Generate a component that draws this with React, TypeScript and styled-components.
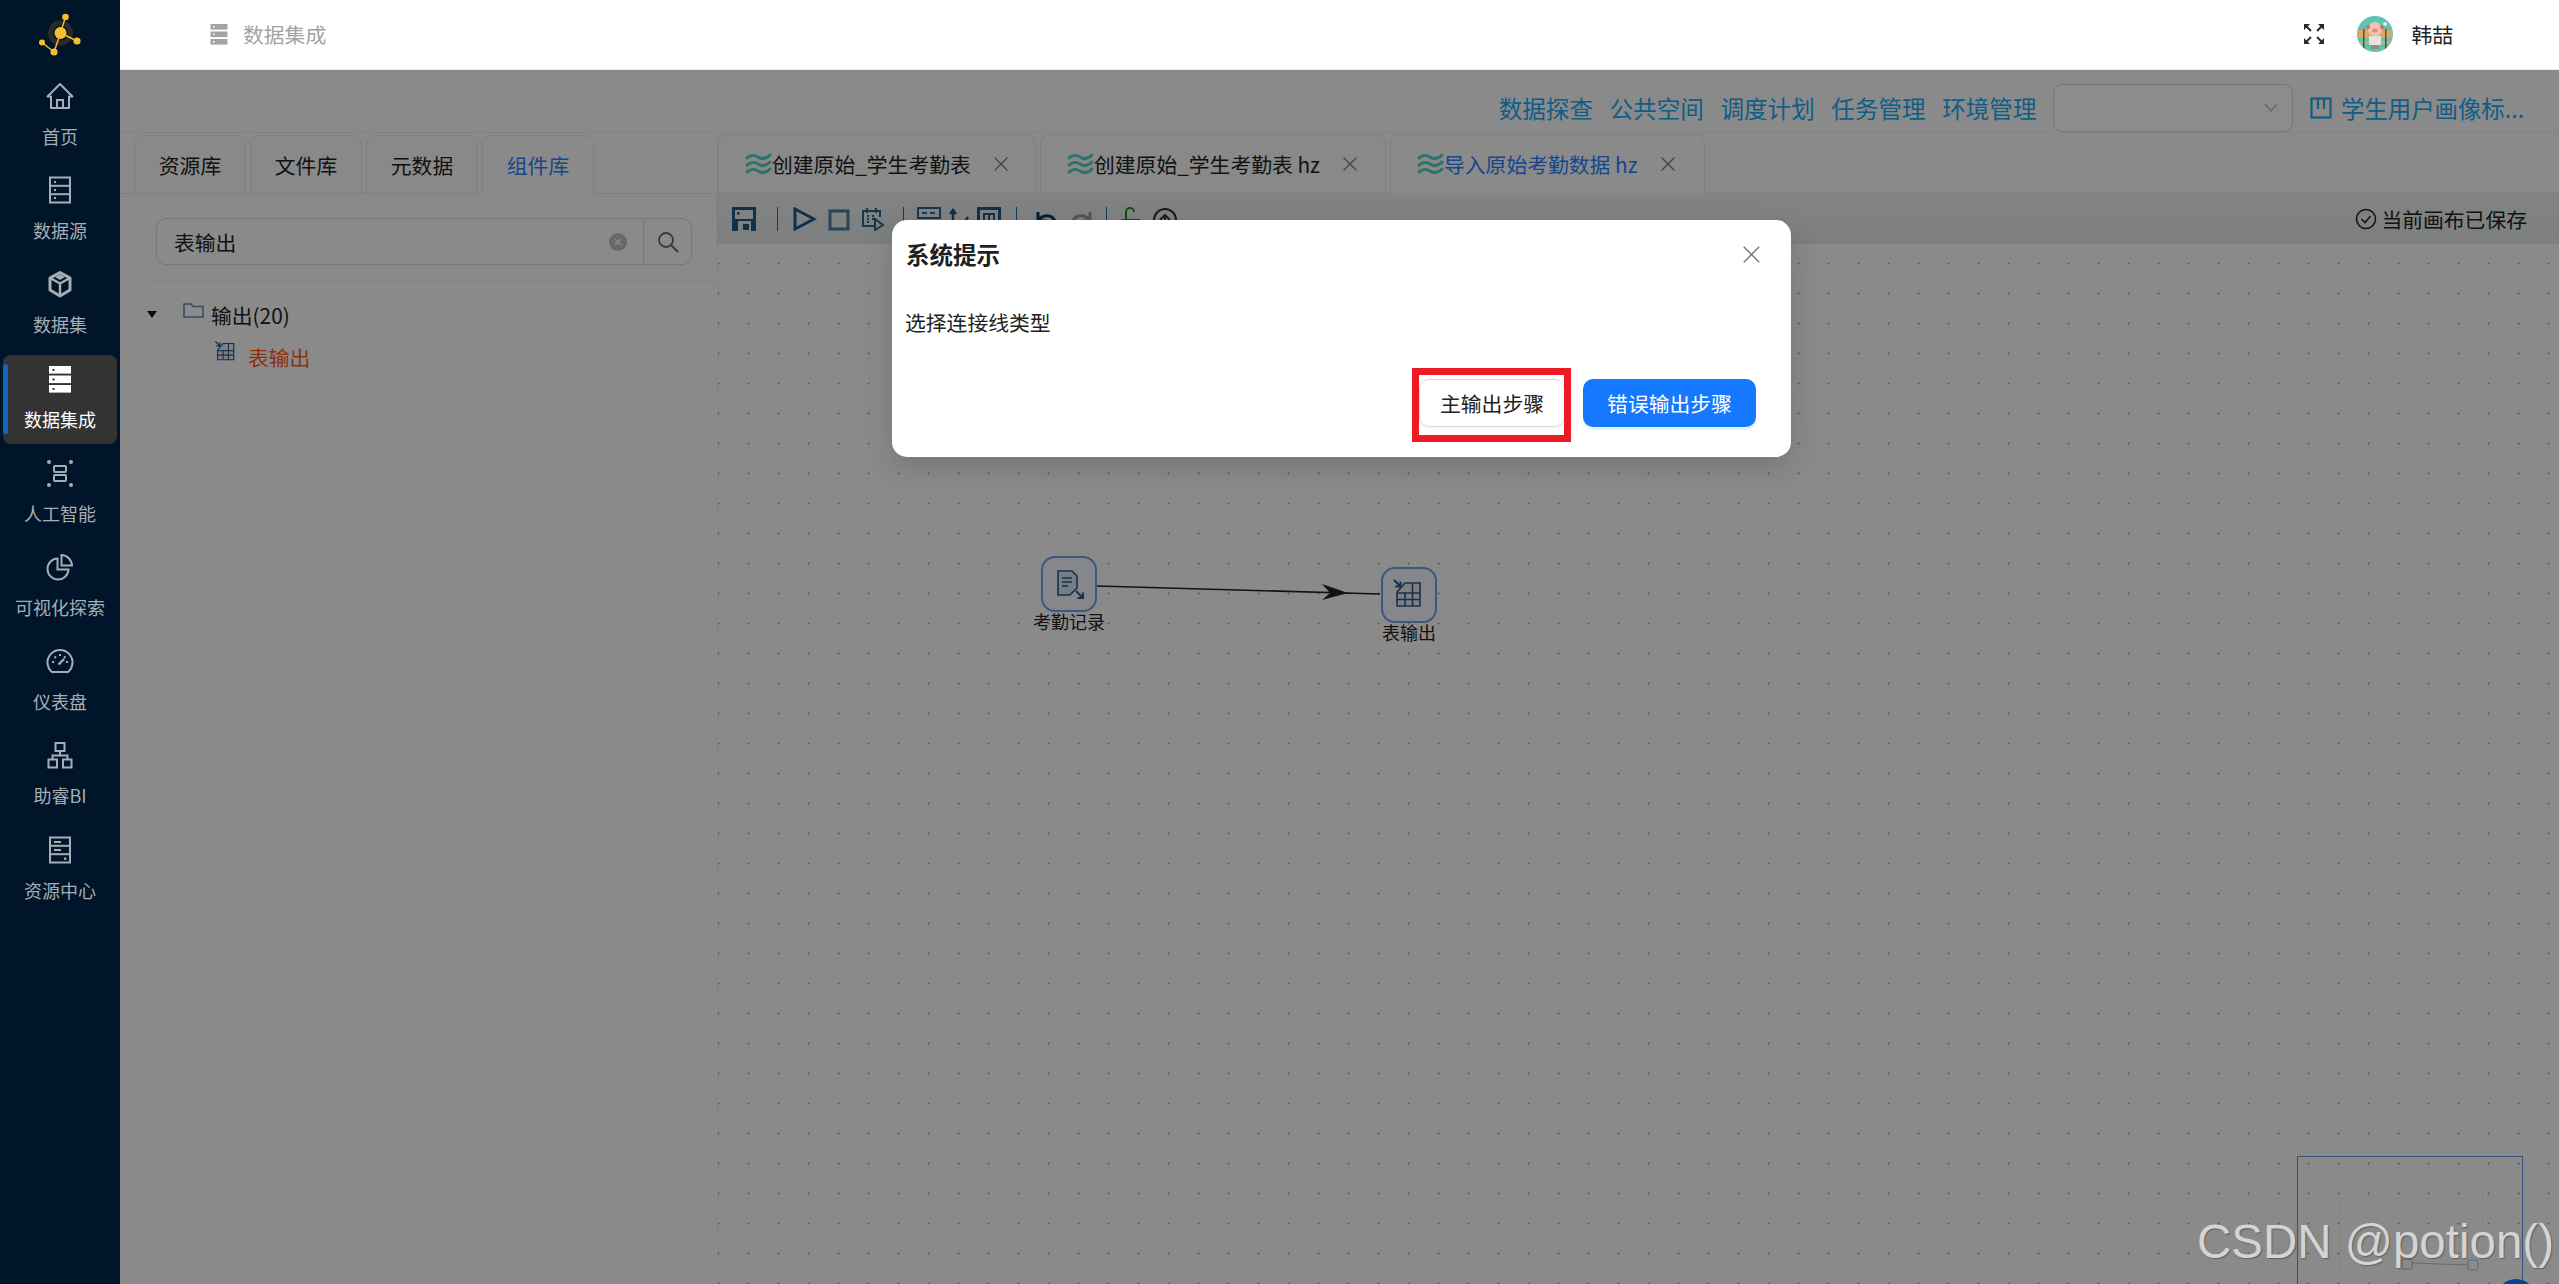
import React from 'react'
import styled, { createGlobalStyle } from 'styled-components'

const FONT = `"Noto Sans CJK SC", "Noto Sans", sans-serif`

const GlobalStyle = createGlobalStyle`
  html, body, #root {
    margin: 0;
    height: 100%;
  }
  body {
    font-family: ${FONT};
    overflow: hidden;
  }
`

const Page = styled.div`
  position: relative;
  display: flex;
  width: 2559px;
  height: 1284px;
  overflow: hidden;
`

/* ---------- sidebar ---------- */

const Sidebar = styled.nav`
  width: 120px;
  flex: none;
  background: #00152a;
  display: flex;
  flex-direction: column;
  align-items: center;
`

const LogoSlot = styled.div`
  height: 72px;
  width: 100%;
  svg {
    display: block;
  }
`

const SideItem = styled.div<{ $active?: boolean }>`
  position: relative;
  box-sizing: border-box;
  width: 114px;
  height: 89px;
  margin-bottom: 5.2px;
  padding-top: 10px;
  border-radius: 8px;
  display: flex;
  flex-direction: column;
  align-items: center;
  color: ${(p) => (p.$active ? '#fff' : '#a6adb4')};
  background: ${(p) => (p.$active ? '#333' : 'transparent')};
  &::before {
    content: '';
    display: ${(p) => (p.$active ? 'block' : 'none')};
    position: absolute;
    left: 0;
    top: 9px;
    width: 5px;
    height: 70px;
    border-radius: 3px;
    background: #1565c0;
  }
`

const SideIcon = styled.div`
  height: 28px;
  display: flex;
  align-items: center;
  justify-content: center;
`

const SideLabel = styled.div`
  margin-top: 15px;
  font-size: 18px;
  line-height: 22px;
  white-space: nowrap;
`

const Logo = () => (
  <svg width="120" height="72" viewBox="0 0 120 72">
    <circle cx="60.5" cy="33" r="10" fill="none" stroke="#2b2a26" strokeWidth="5" />
    <g stroke="#f5c02e" strokeWidth="1.4">
      <line x1="60.5" y1="33" x2="65.5" y2="17" />
      <line x1="60.5" y1="33" x2="77" y2="41" />
      <line x1="60.5" y1="33" x2="54" y2="52" />
      <line x1="54" y1="52" x2="42" y2="42.5" />
    </g>
    <g fill="#f5c02e">
      <circle cx="60.5" cy="33" r="6" />
      <circle cx="65.5" cy="17" r="3.3" />
      <circle cx="77" cy="41" r="3.6" />
      <circle cx="42" cy="42.5" r="3" />
      <circle cx="54" cy="52" r="3.6" />
    </g>
  </svg>
)

const IconBase = ({ w = 28, h = 28, children }: { w?: number; h?: number; children: React.ReactNode }) => (
  <svg width={w} height={h} viewBox={`0 0 ${w} ${h}`} fill="none" stroke="currentColor" strokeWidth="2">
    {children}
  </svg>
)

const HomeIcon = () => (
  <IconBase>
    <path d="M1.5 14.5 14 2 26.5 14.5 H23 V26 H5 V14.5 Z" strokeLinejoin="round" />
    <path d="M11 26 V18 H17 V26" />
  </IconBase>
)

const ServerIcon = () => (
  <IconBase>
    <rect x="4" y="1.5" width="20" height="25" />
    <line x1="4" y1="9.8" x2="24" y2="9.8" />
    <line x1="4" y1="18.2" x2="24" y2="18.2" />
    <g fill="currentColor" stroke="none">
      <rect x="8" y="5" width="2" height="2" />
      <rect x="8" y="13" width="2" height="2" />
      <rect x="8" y="21" width="2" height="2" />
    </g>
  </IconBase>
)

const CubeIcon = () => (
  <IconBase>
    <path d="M14 2.5 24 8 V20 L14 26 4 20 V8 Z" strokeWidth="3" strokeLinejoin="round" />
    <path d="M5 8.5 14 13.5 23 8.5 M14 13.5 V25" strokeWidth="2.4" />
    <path d="M9 7 14 4.2 19 7 14 10 Z" fill="currentColor" stroke="none" />
  </IconBase>
)

const StackIcon = () => (
  <svg width="24" height="28" viewBox="0 0 24 28">
    {[1, 10.5, 20].map((y) => (
      <g key={y}>
        <rect x="1" y={y} width="22" height="7.6" fill="currentColor" />
        <rect x="4.5" y={y + 3} width="2" height="2" fill="#333" />
      </g>
    ))}
  </svg>
)

const ScanIcon = () => (
  <IconBase>
    <g fill="currentColor" stroke="none">
      <circle cx="3" cy="3" r="2" />
      <circle cx="25" cy="3" r="2" />
      <circle cx="3" cy="26" r="2" />
      <circle cx="25" cy="26" r="2" />
    </g>
    <rect x="8" y="7" width="12" height="6" rx="1" />
    <rect x="8" y="16" width="12" height="6" rx="1" />
  </IconBase>
)

const PieIcon = () => (
  <IconBase>
    <path d="M11.5 5.5 A10.5 10.5 0 1 0 22.5 16.5 H11.5 Z" />
    <path d="M15.5 2 A11 11 0 0 1 26 12.5 H15.5 Z" />
  </IconBase>
)

const GaugeIcon = () => (
  <IconBase>
    <path d="M6 25 A12.5 12.5 0 1 1 22 25 Z" strokeLinejoin="round" />
    <path d="M14 7 V9 M6 15 H8 M20 15 H22 M8.5 9.5 10 11 M19.5 9.5 18 11" />
    <path d="M12.5 17.5 18 12" strokeWidth="2.4" />
  </IconBase>
)

const HierarchyIcon = () => (
  <IconBase>
    <rect x="9.5" y="2" width="9" height="8" />
    <rect x="2.5" y="18.5" width="8.5" height="8" />
    <rect x="17" y="18.5" width="8.5" height="8" />
    <path d="M14 10 V14.5 M6.5 18.5 V14.5 H21.5 V18.5" />
  </IconBase>
)

const CabinetIcon = () => (
  <IconBase>
    <rect x="4" y="1.5" width="20" height="25" />
    <line x1="4" y1="9.8" x2="24" y2="9.8" />
    <line x1="4" y1="18.2" x2="24" y2="18.2" />
    <path d="M8 6 H15 M8 14 H15" />
    <rect x="18" y="21.5" width="2.4" height="2.4" fill="currentColor" stroke="none" />
  </IconBase>
)

const sideItems = [
  { label: '首页', icon: <HomeIcon /> },
  { label: '数据源', icon: <ServerIcon /> },
  { label: '数据集', icon: <CubeIcon /> },
  { label: '数据集成', icon: <StackIcon />, active: true },
  { label: '人工智能', icon: <ScanIcon /> },
  { label: '可视化探索', icon: <PieIcon /> },
  { label: '仪表盘', icon: <GaugeIcon /> },
  { label: '助睿BI', icon: <HierarchyIcon /> },
  { label: '资源中心', icon: <CabinetIcon /> },
]

/* ---------- header ---------- */

const RightColumn = styled.div`
  flex: 1;
  min-width: 0;
  display: flex;
  flex-direction: column;
`

const Header = styled.header`
  box-sizing: border-box;
  height: 70px;
  flex: none;
  background: #fff;
  border-bottom: 1px solid #f0f0f0;
  display: flex;
  align-items: center;
  padding: 0 106px 2px 90px;
  font-size: 20.8px;
`

const Crumb = styled.div`
  display: flex;
  align-items: center;
  gap: 15px;
  color: #a3a3a3;
  flex: 1;
  svg {
    display: block;
  }
`

const UserBox = styled.div`
  display: flex;
  align-items: center;
  color: #222;
  svg {
    display: block;
  }
`

const ExpandIcon = () => (
  <svg width="22" height="22" viewBox="0 0 22 22" fill="#2a2a2a" stroke="#2a2a2a" strokeWidth="2">
    <path d="M8 8 2.5 2.5 M14 8 19.5 2.5 M8 14 2.5 19.5 M14 14 19.5 19.5" />
    <path d="M1 1 H7 L1 7 Z M21 1 H15 L21 7 Z M1 21 H7 L1 15 Z M21 21 H15 L21 15 Z" stroke="none" />
  </svg>
)

const AvatarWrap = styled.div`
  width: 36px;
  height: 36px;
  margin: 0 18px 0 32px;
  border-radius: 50%;
  overflow: hidden;
`

const Avatar = () => (
  <svg width="36" height="36" viewBox="0 0 36 36">
    <rect width="36" height="36" fill="#5cc4b2" />
    <g fill="#d9a862">
      <rect x="1" y="14" width="34" height="8" />
      <rect x="1" y="25" width="34" height="3" />
    </g>
    <rect x="6" y="13" width="1.5" height="20" fill="#6b4a2a" />
    <rect x="28" y="13" width="1.5" height="20" fill="#6b4a2a" />
    <rect x="12" y="20" width="12" height="9" fill="#e8e4dc" />
    <rect x="14" y="29" width="8" height="4" fill="#9a8a7a" />
    <circle cx="18" cy="13" r="7" fill="#f2c4b4" />
    <circle cx="11" cy="11" r="2.2" fill="#c77a6c" />
    <circle cx="25" cy="11" r="2.2" fill="#c77a6c" />
    <ellipse cx="18" cy="14.5" rx="3" ry="2" fill="#e58b8b" />
    <circle cx="28" cy="8" r="2" fill="#eee" />
  </svg>
)

/* ---------- workspace under the mask ---------- */

const Main = styled.main`
  position: relative;
  flex: 1;
  min-height: 0;
  display: flex;
  flex-direction: column;
  background: #fcfcfc;
`

const NavBar = styled.div`
  box-sizing: border-box;
  height: 63px;
  flex: none;
  border-bottom: 1px solid #eee;
  display: flex;
  align-items: center;
  justify-content: flex-end;
  padding: 13px 34px 0 0;
`

const NavLink = styled.a`
  font-size: 23.6px;
  line-height: 32px;
  color: #20aaf5;
  margin-right: 16.5px;
  white-space: nowrap;
`

const SelectBox = styled.div`
  box-sizing: border-box;
  width: 240px;
  height: 48px;
  border: 1px solid #d9d9d9;
  border-radius: 9px;
  background: #fff;
  display: flex;
  align-items: center;
  justify-content: flex-end;
  padding-right: 14px;
  color: #bbb;
  margin-right: 17px;
`

const ProjectLink = styled.div`
  display: flex;
  align-items: center;
  gap: 9px;
  width: 215px;
  font-size: 23.4px;
  line-height: 32px;
  color: #20aaf5;
  white-space: nowrap;
  svg {
    display: block;
    flex: none;
  }
`

const Workspace = styled.div`
  flex: 1;
  min-height: 0;
  display: flex;
`

const LeftPanel = styled.aside`
  box-sizing: border-box;
  width: 598px;
  flex: none;
  border-right: 1px solid #eee;
  display: flex;
  flex-direction: column;
`

const LeftTabs = styled.div`
  box-sizing: border-box;
  height: 61px;
  padding: 2px 0 0 14px;
  display: flex;
  gap: 4px;
  border-bottom: 1px solid #e8e8e8;
`

const LeftTab = styled.div<{ $active?: boolean }>`
  box-sizing: border-box;
  width: 112px;
  height: 59px;
  margin-bottom: -1px;
  border: 1px solid #e8e8e8;
  border-bottom-color: ${(p) => (p.$active ? '#fcfcfc' : '#e8e8e8')};
  border-radius: 10px 10px 0 0;
  background: ${(p) => (p.$active ? '#fcfcfc' : '#fafafa')};
  color: ${(p) => (p.$active ? '#2a80ff' : '#222')};
  font-size: 20.8px;
  display: flex;
  align-items: center;
  justify-content: center;
`

const SearchArea = styled.div`
  margin-left: 29px;
  padding: 24px 25px 16px 7px;
  border-bottom: 1px solid #eee;
`

const SearchBox = styled.div`
  box-sizing: border-box;
  height: 47px;
  display: flex;
  border: 1px solid #d9d9d9;
  border-radius: 10px;
  background: #fcfcfc;
`

const SearchInput = styled.div`
  flex: 1;
  display: flex;
  align-items: center;
  justify-content: space-between;
  padding: 0 16px 0 17px;
  font-size: 20.8px;
  color: #222;
`

const ClearDot = styled.span`
  width: 18px;
  height: 18px;
  border-radius: 50%;
  background: #bdbdbd;
  display: flex;
  align-items: center;
  justify-content: center;
`

const SearchButton = styled.div`
  width: 47px;
  border-left: 1px solid #d9d9d9;
  color: #666;
  display: flex;
  align-items: center;
  justify-content: center;
`

const Tree = styled.div`
  padding: 12px 0 0 25px;
`

const TreeRow = styled.div<{ $indent?: number }>`
  display: flex;
  align-items: center;
  height: 42px;
  margin-left: ${(p) => p.$indent || 0}px;
  font-size: 20.8px;
  color: #222;
  svg {
    display: block;
    flex: none;
  }
`

const Caret = styled.span`
  width: 0;
  height: 0;
  margin: 0 26px 2px 2px;
  border-left: 5px solid transparent;
  border-right: 5px solid transparent;
  border-top: 7px solid #111;
`

const RowIcon = styled.span<{ $gap: number }>`
  margin-right: ${(p) => p.$gap}px;
  margin-bottom: 10px;
`

const LeafName = styled.span`
  color: #ff5a14;
`

/* ---------- editor ---------- */

const Editor = styled.section`
  flex: 1;
  min-width: 0;
  display: flex;
  flex-direction: column;
`

const FlowTabs = styled.div`
  box-sizing: border-box;
  height: 60px;
  flex: none;
  padding-top: 1px;
  display: flex;
  gap: 4px;
  border-bottom: 1px solid #e4e4e4;
`

const FlowTab = styled.div<{ $w: number; $active?: boolean }>`
  box-sizing: border-box;
  width: ${(p) => p.$w}px;
  height: 59px;
  margin-bottom: -1px;
  padding-left: 26px;
  border: 1px solid #e8e8e8;
  border-bottom-color: ${(p) => (p.$active ? '#fcfcfc' : '#e8e8e8')};
  border-radius: 10px 10px 0 0;
  background: ${(p) => (p.$active ? '#fcfcfc' : '#fafafa')};
  color: ${(p) => (p.$active ? '#2a80ff' : '#222')};
  font-size: 20.8px;
  display: flex;
  align-items: center;
  white-space: nowrap;
  svg {
    display: block;
    flex: none;
  }
`

const TabClose = styled.span`
  margin-left: 22px;
  color: #777;
  display: flex;
`

const Toolbar = styled.div`
  box-sizing: border-box;
  height: 51px;
  flex: none;
  background: linear-gradient(#eef1f1, #e4e8e8);
  box-shadow: 0 2px 3px rgba(0, 0, 0, 0.12);
  padding: 14px 32px 0 14px;
  display: flex;
  align-items: flex-start;
  position: relative;
  color: #1e5a8a;
  svg {
    display: block;
    flex: none;
  }
`

const ToolDivider = styled.span`
  width: 1px;
  height: 24px;
  background: #1e6fc0;
`

const ToolGroup = styled.div<{ $gap?: number; $mx?: number }>`
  display: flex;
  gap: ${(p) => p.$gap ?? 10}px;
  margin: 0 ${(p) => p.$mx ?? 13}px;
`

const SavedNote = styled.div`
  margin-left: auto;
  margin-top: -3px;
  display: flex;
  align-items: center;
  gap: 4px;
  font-size: 20.8px;
  line-height: 30px;
  color: #222;
`

const Canvas = styled.div`
  position: relative;
  flex: 1;
  min-height: 0;
  background-color: #fcfcfc;
  background-image: radial-gradient(circle at 1.5px 1.5px, #a8a8a8 0, #a8a8a8 0.8px, transparent 1.3px);
  background-size: 30px 30px;
  background-position: -1px 18px;
`

const EdgeLayer = styled.svg`
  position: absolute;
  left: 0;
  top: 0;
  width: 100%;
  height: 100%;
  pointer-events: none;
`

const FlowNode = styled.div<{ $x: number; $y: number }>`
  position: absolute;
  left: ${(p) => p.$x}px;
  top: ${(p) => p.$y}px;
  width: 56px;
  display: flex;
  flex-direction: column;
  align-items: center;
`

const NodeBox = styled.div`
  box-sizing: border-box;
  width: 56px;
  height: 56px;
  border: 2px solid #6d9eea;
  border-radius: 14px;
  background: #f2f6fc;
  display: flex;
  align-items: center;
  justify-content: center;
  svg {
    display: block;
  }
`

const NodeLabel = styled.div`
  font-size: 18px;
  line-height: 18px;
  color: #222;
  white-space: nowrap;
`

const MiniMap = styled.div`
  position: absolute;
  right: 36px;
  top: 912px;
  width: 226px;
  height: 300px;
  box-sizing: border-box;
  border: 1px solid #5f97e0;
`

const MiniFrame = styled.div`
  margin: 30px 0 0 42px;
  width: 141px;
  height: 90px;
  border: 1px solid #f3f3f3;
  position: relative;
  svg {
    display: block;
  }
`

const HelpBubble = styled.div`
  position: absolute;
  right: 23px;
  top: 1035px;
  width: 40px;
  height: 40px;
  border-radius: 50%;
  background: #1677ff;
`

/* ---------- modal ---------- */

const Mask = styled.div`
  position: absolute;
  inset: 0;
  background: rgba(0, 0, 0, 0.45);
`

const Modal = styled.div`
  position: absolute;
  left: 772px;
  top: 150px;
  box-sizing: border-box;
  width: 899px;
  height: 237px;
  padding: 0 35px 0 13px;
  background: #fff;
  border-radius: 15px;
  box-shadow: 0 10px 30px rgba(0, 0, 0, 0.15);
  display: flex;
  flex-direction: column;
`

const ModalHead = styled.div`
  height: 68px;
  display: flex;
  align-items: center;
  justify-content: space-between;
  padding-left: 1px;
  font-size: 23.5px;
  font-weight: 700;
  color: #1f1f1f;
  svg {
    display: block;
    margin-right: -5px;
    color: #777;
  }
`

const ModalBody = styled.div`
  margin-top: 18px;
  font-size: 20.8px;
  line-height: 32px;
  color: #222;
`

const ModalFoot = styled.div`
  margin-top: 41px;
  display: flex;
  justify-content: flex-end;
  gap: 18px;
`

const Flagged = styled.div`
  position: relative;
  &::after {
    content: '';
    position: absolute;
    left: -7px;
    right: -6px;
    top: -11px;
    bottom: -15px;
    border: 7px solid #ed1c24;
    pointer-events: none;
  }
`

const DialogButton = styled.button<{ $primary?: boolean }>`
  box-sizing: border-box;
  height: 48px;
  width: ${(p) => (p.$primary ? 173 : 146)}px;
  padding: 0;
  border: ${(p) => (p.$primary ? 'none' : '1px solid #d9d9d9')};
  border-radius: 10px;
  background: ${(p) => (p.$primary ? '#1677ff' : '#fff')};
  color: ${(p) => (p.$primary ? '#fff' : '#222')};
  font-family: ${FONT};
  font-size: 20.8px;
  box-shadow: 0 3px 0 ${(p) => (p.$primary ? 'rgba(5, 145, 255, 0.1)' : 'rgba(0, 0, 0, 0.02)')};
`

const Watermark = styled.div`
  position: absolute;
  right: 5px;
  bottom: 12px;
  font-family: "Liberation Sans", sans-serif;
  font-size: 47.5px;
  line-height: 60px;
  color: #d4d4d4;
  text-shadow: 1px 1px 1px rgba(60, 60, 60, 0.55);
  white-space: nowrap;
`

/* ---------- small drawings ---------- */

const WaveIcon = () => (
  <svg width="27" height="24" viewBox="0 0 27 24" fill="none" stroke="#55cfc4" strokeWidth="3" strokeLinecap="round">
    <path d="M2 6 C7 2 10 3 13 5 C16 7 20 8 25 3" />
    <path d="M2 13 C7 9 10 10 13 12 C16 14 20 15 25 10" />
    <path d="M2 20 C7 16 10 17 13 19 C16 21 20 22 25 17" />
  </svg>
)

const CloseGlyph = ({ size = 16 }: { size?: number }) => (
  <svg width={size} height={size} viewBox="0 0 16 16" fill="none" stroke="currentColor" strokeWidth="1.2">
    <path d="M1.5 1.5 14.5 14.5 M14.5 1.5 1.5 14.5" />
  </svg>
)

const TableGlyph = ({ size = 34 }: { size?: number }) => (
  <svg width={size} height={size} viewBox="0 0 34 34" fill="none" stroke="#2c5a85" strokeWidth="1.6">
    <path d="M13 5 H28 V28 H5 V14 Z" fill="#e4e9f0" />
    <path d="M5 15 H28 M5 21.5 H28 M13 15 V28 M20.5 5 V28" />
    <path d="M2 2 L8.5 8.5 M8.5 3.5 V8.5 H3.5" strokeWidth="2" />
  </svg>
)

const DocGlyph = () => (
  <svg width="34" height="34" viewBox="0 0 34 34" fill="none" stroke="#2c5a85" strokeWidth="1.6">
    <path d="M6 4 H20 L25 9 V21 L18 28 H6 Z" fill="#d5e5f3" />
    <path d="M10 11 H20 M10 15 H20 M10 19 H16" />
    <path d="M24 24 L31 31 M31 25.5 V31 H25.5" strokeWidth="2" />
  </svg>
)

const App = () => (
  <>
    <GlobalStyle />
    <Page>
      <Sidebar>
        <LogoSlot>
          <Logo />
        </LogoSlot>
        {sideItems.map((item) => (
          <SideItem key={item.label} $active={item.active}>
            <SideIcon>{item.icon}</SideIcon>
            <SideLabel>{item.label}</SideLabel>
          </SideItem>
        ))}
      </Sidebar>
      <RightColumn>
        <Header>
          <Crumb>
            <svg width="18" height="22" viewBox="0 0 18 22" fill="#a3a3a3">
              {[1, 8.5, 16].map((y) => (
                <g key={y}>
                  <rect x="0.5" y={y} width="17" height="5.6" />
                  <rect x="3" y={y + 2} width="1.6" height="1.6" fill="#fff" />
                </g>
              ))}
            </svg>
            数据集成
          </Crumb>
          <UserBox>
            <ExpandIcon />
            <AvatarWrap>
              <Avatar />
            </AvatarWrap>
            韩喆
          </UserBox>
        </Header>
        <Main>
          <NavBar>
            <NavLink>数据探查</NavLink>
            <NavLink>公共空间</NavLink>
            <NavLink>调度计划</NavLink>
            <NavLink>任务管理</NavLink>
            <NavLink>环境管理</NavLink>
            <SelectBox>
              <svg width="14" height="9" viewBox="0 0 14 9" fill="none" stroke="currentColor" strokeWidth="1.4">
                <path d="M1 1 7 8 13 1" />
              </svg>
            </SelectBox>
            <ProjectLink>
              <svg width="22" height="22" viewBox="0 0 22 22" fill="none" stroke="currentColor" strokeWidth="2.2">
                <rect x="1.5" y="1.5" width="19" height="19" />
                <path d="M8 1.5 V12 M14 1.5 V12" />
              </svg>
              学生用户画像标...
            </ProjectLink>
          </NavBar>
          <Workspace>
            <LeftPanel>
              <LeftTabs>
                <LeftTab>资源库</LeftTab>
                <LeftTab>文件库</LeftTab>
                <LeftTab>元数据</LeftTab>
                <LeftTab $active>组件库</LeftTab>
              </LeftTabs>
              <SearchArea>
                <SearchBox>
                  <SearchInput>
                    表输出
                    <ClearDot>
                      <svg width="8" height="8" viewBox="0 0 8 8" stroke="#fff" strokeWidth="1.2">
                        <path d="M1 1 7 7 M7 1 1 7" />
                      </svg>
                    </ClearDot>
                  </SearchInput>
                  <SearchButton>
                    <svg width="22" height="22" viewBox="0 0 22 22" fill="none" stroke="currentColor" strokeWidth="1.8">
                      <circle cx="9" cy="9" r="7" />
                      <path d="M14 14 21 21" />
                    </svg>
                  </SearchButton>
                </SearchBox>
              </SearchArea>
              <Tree>
                <TreeRow>
                  <Caret />
                  <RowIcon $gap={7}>
                    <svg width="21" height="15" viewBox="0 0 21 15" fill="none" stroke="#5d88b0" strokeWidth="1.5">
                      <path d="M1 14 V1 H8 L10 3.5 H20 V14 Z" />
                    </svg>
                  </RowIcon>
                  输出(20)
                </TreeRow>
                <TreeRow $indent={69}>
                  <RowIcon $gap={10}>
                    <TableGlyph size={24} />
                  </RowIcon>
                  <LeafName>表输出</LeafName>
                </TreeRow>
              </Tree>
            </LeftPanel>
            <Editor>
              <FlowTabs>
                <FlowTab $w={318}>
                  <WaveIcon />
                  创建原始_学生考勤表
                  <TabClose>
                    <CloseGlyph />
                  </TabClose>
                </FlowTab>
                <FlowTab $w={346}>
                  <WaveIcon />
                  创建原始_学生考勤表 hz
                  <TabClose>
                    <CloseGlyph />
                  </TabClose>
                </FlowTab>
                <FlowTab $w={315} $active>
                  <WaveIcon />
                  导入原始考勤数据 hz
                  <TabClose>
                    <CloseGlyph />
                  </TabClose>
                </FlowTab>
              </FlowTabs>
              <Toolbar>
                <svg width="24" height="24" viewBox="0 0 24 24" fill="#1e5a8a">
                  <path d="M0 0 H24 V24 H0 Z M3 3 V12 H21 V3 Z M6 14 V24 H19 V14 Z" fillRule="evenodd" />
                  <rect x="5" y="5" width="2.5" height="2.5" />
                  <rect x="11" y="17" width="6" height="6" />
                </svg>
                <ToolGroup $mx={21} $gap={0}>
                  <ToolDivider />
                </ToolGroup>
                <ToolGroup $mx={-6} $gap={11}>
                  <svg width="24" height="24" viewBox="0 0 24 24" fill="none" stroke="#1e5a8a" strokeWidth="3">
                    <path d="M2 2 21 12 2 22 Z" />
                  </svg>
                  <svg width="22" height="22" viewBox="0 0 22 22" fill="none" stroke="#4a7ca6" strokeWidth="3" style={{ marginTop: 2 }}>
                    <rect x="2" y="2" width="18" height="18" />
                  </svg>
                  <svg width="24" height="24" viewBox="0 0 24 24" fill="none" stroke="#2a6490" strokeWidth="2">
                    <path d="M13 19 H2 V4 H19 V10 M6 1 V6 M15 1 V6" />
                    <path d="M14 12 22 18 14 23 Z" />
                    <path d="M6 9 H9 M11 9 H14 M6 12 H9 M11 12 H13 M6 15 H9" strokeDasharray="2 1" />
                  </svg>
                </ToolGroup>
                <ToolGroup $mx={24} $gap={0}>
                  <ToolDivider />
                </ToolGroup>
                <ToolGroup $mx={-11} $gap={8}>
                  <svg width="24" height="24" viewBox="0 0 24 24" fill="none" stroke="#2a6490" strokeWidth="2">
                    <rect x="1" y="1" width="22" height="10" />
                    <path d="M5 6 H10 M13 6 H18 M1 17 H23" />
                  </svg>
                  <svg width="20" height="24" viewBox="0 0 20 24" fill="none" stroke="#1e5a8a" strokeWidth="2.4">
                    <path d="M4 24 V3 M1 7 4 3 7 7 M11 22 19 10" />
                  </svg>
                  <svg width="24" height="24" viewBox="0 0 24 24" fill="none" stroke="#1e5a8a" strokeWidth="3">
                    <rect x="1.5" y="1.5" width="21" height="21" />
                    <path d="M7 18 V7 H17 V18 M12 7 V18" strokeWidth="2" />
                  </svg>
                </ToolGroup>
                <ToolGroup $mx={26} $gap={0}>
                  <ToolDivider />
                </ToolGroup>
                <ToolGroup $mx={-7} $gap={12}>
                  <svg width="22" height="24" viewBox="0 0 22 24" fill="none" stroke="#12385a" strokeWidth="3">
                    <path d="M20 20 C20 8 10 6 3 12 M2 5 V14 H11" />
                  </svg>
                  <svg width="22" height="24" viewBox="0 0 22 24" fill="none" stroke="#9a9a9a" strokeWidth="3">
                    <path d="M2 20 C2 8 12 6 19 12 M20 5 V14 H11" />
                  </svg>
                </ToolGroup>
                <ToolGroup $mx={21} $gap={0}>
                  <ToolDivider />
                </ToolGroup>
                <ToolGroup $mx={-6} $gap={12}>
                  <svg width="18" height="26" viewBox="0 0 18 26" fill="none" stroke="#1f8f1f" strokeWidth="2">
                    <path d="M4 13 V5 A4 4 0 0 1 12 5" />
                    <rect x="1" y="13" width="16" height="11" />
                  </svg>
                  <svg width="26" height="26" viewBox="0 0 26 26" fill="none" stroke="#333" strokeWidth="2">
                    <circle cx="13" cy="13" r="11" />
                    <path d="M13 19 V8 M8 13 13 8 18 13" />
                  </svg>
                </ToolGroup>
                <SavedNote>
                  <svg width="22" height="22" viewBox="0 0 22 22" fill="none" stroke="#222" strokeWidth="1.6">
                    <circle cx="11" cy="11" r="9.5" />
                    <path d="M6.5 11 10 14.5 15.5 8" />
                  </svg>
                  当前画布已保存
                </SavedNote>
              </Toolbar>
              <Canvas>
                <EdgeLayer>
                  <line x1="379" y1="342" x2="662" y2="350" stroke="#222" strokeWidth="1.6" />
                  <path d="M604 340 L630 349 L604 356 L612 349 Z" fill="#222" />
                </EdgeLayer>
                <FlowNode $x={323} $y={312}>
                  <NodeBox>
                    <DocGlyph />
                  </NodeBox>
                  <NodeLabel>考勤记录</NodeLabel>
                </FlowNode>
                <FlowNode $x={663} $y={323}>
                  <NodeBox>
                    <TableGlyph />
                  </NodeBox>
                  <NodeLabel>表输出</NodeLabel>
                </FlowNode>
                <MiniMap>
                  <MiniFrame>
                    <svg width="139" height="88" viewBox="0 0 139 88" fill="none" stroke="#a9bcd2" strokeWidth="1">
                      <rect x="61" y="71" width="10" height="10" rx="2" />
                      <rect x="127" y="72" width="10" height="10" rx="2" />
                      <line x1="71" y1="75" x2="127" y2="77" stroke="#999" strokeWidth="0.6" />
                    </svg>
                  </MiniFrame>
                </MiniMap>
                <HelpBubble />
              </Canvas>
            </Editor>
          </Workspace>
          <Mask />
          <Modal>
            <ModalHead>
              系统提示
              <CloseGlyph size={19} />
            </ModalHead>
            <ModalBody>选择连接线类型</ModalBody>
            <ModalFoot>
              <Flagged>
                <DialogButton>主输出步骤</DialogButton>
              </Flagged>
              <DialogButton $primary>错误输出步骤</DialogButton>
            </ModalFoot>
          </Modal>
        </Main>
      </RightColumn>
      <Watermark>CSDN @potion()</Watermark>
    </Page>
  </>
)

export default App
